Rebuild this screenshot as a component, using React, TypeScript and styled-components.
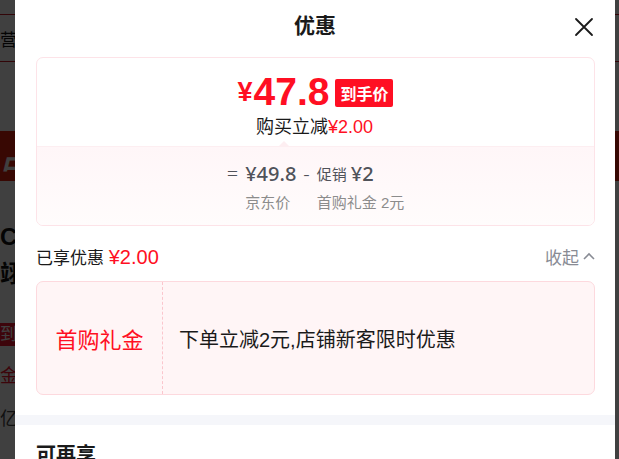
import React, { FC } from 'react';
import styled, { createGlobalStyle } from 'styled-components';

const GlobalStyle = createGlobalStyle`
  html, body {
    margin: 0;
    padding: 0;
    background: #ffffff;
  }
  body {
    font-family: "Liberation Sans", "Noto Sans CJK SC", sans-serif;
  }
`;

const CN = `"Liberation Sans", "Noto Sans CJK SC", sans-serif`;
const NUM = `"Noto Sans", "Noto Sans CJK SC", sans-serif`;

const Screen = styled.div`
  position: relative;
  width: 619px;
  height: 459px;
  overflow: hidden;
`;

/* page behind the sheet, only a sliver of it shows */
const BackPage = styled.div`
  display: flex;
  flex-direction: column;
  width: 619px;
  font-family: ${CN};
`;

const BackTabs = styled.div`
  margin-top: 14px;
  height: 46px;
  border-top: 1px solid #c81623;
  border-bottom: 1px solid #c81623;
  display: flex;
  align-items: center;
  font-size: 17px;
  color: #111;
`;

const BackBanner = styled.div`
  margin-top: 69px;
  height: 50px;
  background: #e0230e;
  color: #fff;
  font-weight: bold;
  font-style: italic;
  font-size: 30px;
  display: flex;
  align-items: center;
`;

const BackTitle = styled.div`
  margin-top: 37px;
  font-size: 24px;
  font-weight: bold;
  line-height: 37px;
  color: #111;
`;

const BackTag = styled.div`
  margin-top: 31px;
  width: 60px;
  height: 23px;
  background: #f2142c;
  color: #fff;
  font-size: 17px;
  line-height: 23px;
`;

const BackLine = styled.div<{ tone: string; gap: number }>`
  margin-top: ${p => p.gap}px;
  font-size: 18px;
  line-height: 24px;
  color: ${p => p.tone};
`;

const Overlay = styled.div`
  position: absolute;
  inset: 0;
  background: rgba(0, 0, 0, 0.75);
`;

const Sheet = styled.div`
  position: absolute;
  top: 0;
  left: 15px;
  width: 600px;
  height: 480px;
  background: #ffffff;
  display: flex;
  flex-direction: column;
  font-family: ${CN};
  color: #1a1a1a;
`;

const Header = styled.div`
  height: 57px;
  display: flex;
  align-items: flex-start;
  justify-content: center;
  position: relative;
`;

const Title = styled.h1`
  margin: 0;
  margin-top: 12px;
  font-size: 21px;
  line-height: 28px;
  font-weight: bold;
  color: #1a1a1a;
`;

const CloseButton = styled.button`
  position: absolute;
  right: 20px;
  top: 16px;
  width: 22px;
  height: 22px;
  padding: 0;
  border: 0;
  background: none;
  display: flex;
  align-items: center;
  justify-content: center;
`;

const Body = styled.div`
  padding: 0 20px 0 21px;
  display: flex;
  flex-direction: column;
`;

const PriceCard = styled.div`
  border: 1px solid #fde3e8;
  border-radius: 7px;
  overflow: hidden;
  display: flex;
  flex-direction: column;
`;

const PriceTop = styled.div`
  height: 88px;
  display: flex;
  flex-direction: column;
  align-items: center;
  position: relative;
  border-bottom: 1px solid #fdeef1;
`;

const PriceLine = styled.div`
  margin-top: 15px;
  height: 38px;
  display: flex;
  align-items: center;
  color: #ff0f23;
  font-family: "Liberation Sans", sans-serif;
  font-weight: bold;
`;

const Yen = styled.span<{ size: number }>`
  font-size: ${p => p.size}px;
  margin-right: 1px;
`;

const BigNum = styled.span`
  font-size: 39px;
`;

const Badge = styled.span`
  margin-left: 6px;
  margin-top: 2px;
  height: 28px;
  padding: 0 5px;
  background: #ff0f23;
  color: #fff;
  border-radius: 2px;
  font-family: ${CN};
  font-size: 16px;
  font-weight: bold;
  display: flex;
  align-items: center;
`;

const SubLine = styled.div`
  margin-top: 4px;
  margin-left: -2px;
  font-size: 18px;
  line-height: 24px;
  color: #1a1a1a;
`;

const Red = styled.span<{ size?: number }>`
  color: #ff0f23;
  ${p => (p.size ? `font-size: ${p.size}px;` : '')}
`;

const Tip = styled.span`
  position: absolute;
  left: 241px;
  bottom: -1px;
  width: 0;
  height: 0;
  border-left: 6px solid transparent;
  border-right: 6px solid transparent;
  border-bottom: 6px solid #fdeef1;
`;

const PriceBottom = styled.div`
  height: 78px;
  background: linear-gradient(180deg, #fff6f8 0%, #fffcfc 100%);
  display: grid;
  grid-template-columns: repeat(4, auto);
  grid-template-rows: 32px 24px;
  justify-content: center;
  align-content: start;
  padding-top: 10px;
  box-sizing: border-box;
  column-gap: 7px;
  color: #505259;
`;

const Cell = styled.div<{ sign?: boolean }>`
  display: flex;
  align-items: center;
  gap: 4px;
  font-family: ${NUM};
  font-size: 20px;
  font-weight: ${p => (p.sign ? 300 : 500)};
`;

const Small = styled.span`
  font-family: ${CN};
  font-size: 15px;
  font-weight: normal;
`;

const Label = styled.div`
  font-size: 15px;
  color: #8c8c8c;
  display: flex;
  align-items: center;
`;

const SummaryRow = styled.div`
  height: 55px;
  padding-top: 5px;
  box-sizing: border-box;
  display: flex;
  align-items: center;
  justify-content: space-between;
  font-size: 17px;
`;

const Collapse = styled.span`
  display: flex;
  align-items: center;
  gap: 4px;
  color: #888b94;
  font-size: 17px;
`;

const CouponCard = styled.div`
  height: 112px;
  border: 1px solid #fdd9de;
  border-radius: 7px;
  background: #fff5f6;
  display: flex;
`;

const CouponName = styled.div`
  width: 125px;
  border-right: 1px dashed #fbc6cd;
  display: flex;
  align-items: center;
  justify-content: center;
  color: #ff0f23;
  font-size: 22px;
`;

const CouponDesc = styled.div`
  padding-left: 16px;
  display: flex;
  align-items: center;
  font-size: 20px;
  color: #1a1a1a;
`;

const Band = styled.div`
  margin-top: 20px;
  height: 10px;
  background: #f5f6fa;
`;

const SectionTitle = styled.h2`
  margin: 16px 0 0 21px;
  font-size: 20px;
  line-height: 28px;
  font-weight: bold;
  color: #1a1a1a;
`;

const App: FC = () => {
  return (
    <Screen>
      <GlobalStyle />
      <BackPage>
        <BackTabs>营销活动</BackTabs>
        <BackBanner>占位</BackBanner>
        <BackTitle>
          CF 翊
          <br />
          翊翊
        </BackTitle>
        <BackTag>到手价</BackTag>
        <BackLine tone="#f2142c" gap={18}>金额</BackLine>
        <BackLine tone="#444" gap={19}>亿补</BackLine>
      </BackPage>
      <Overlay />
      <Sheet>
        <Header>
          <Title>优惠</Title>
          <CloseButton aria-label="关闭">
            <svg width="20" height="20" viewBox="0 0 20 20">
              <path d="M2 2 L18 18 M18 2 L2 18" stroke="#1a1a1a" strokeWidth="1.8" strokeLinecap="round" />
            </svg>
          </CloseButton>
        </Header>
        <Body>
          <PriceCard>
            <PriceTop>
              <PriceLine>
                <Yen size={27}>¥</Yen>
                <BigNum>47.8</BigNum>
                <Badge>到手价</Badge>
              </PriceLine>
              <SubLine>
                购买立减<Red>¥2.00</Red>
              </SubLine>
              <Tip />
            </PriceTop>
            <PriceBottom>
              <Cell sign>=</Cell>
              <Cell>¥49.8</Cell>
              <Cell sign>-</Cell>
              <Cell>
                <Small>促销</Small>¥2
              </Cell>
              <div />
              <Label>京东价</Label>
              <div />
              <Label>首购礼金 2元</Label>
            </PriceBottom>
          </PriceCard>
          <SummaryRow>
            <span>
              已享优惠 <Red size={20}>¥2.00</Red>
            </span>
            <Collapse>
              收起
              <svg width="12" height="8" viewBox="0 0 12 8">
                <path d="M1 7 L6 2 L11 7" stroke="#888b94" strokeWidth="1.6" fill="none" />
              </svg>
            </Collapse>
          </SummaryRow>
          <CouponCard>
            <CouponName>首购礼金</CouponName>
            <CouponDesc>下单立减2元,店铺新客限时优惠</CouponDesc>
          </CouponCard>
        </Body>
        <Band />
        <SectionTitle>可再享</SectionTitle>
      </Sheet>
    </Screen>
  );
};

export default App;
